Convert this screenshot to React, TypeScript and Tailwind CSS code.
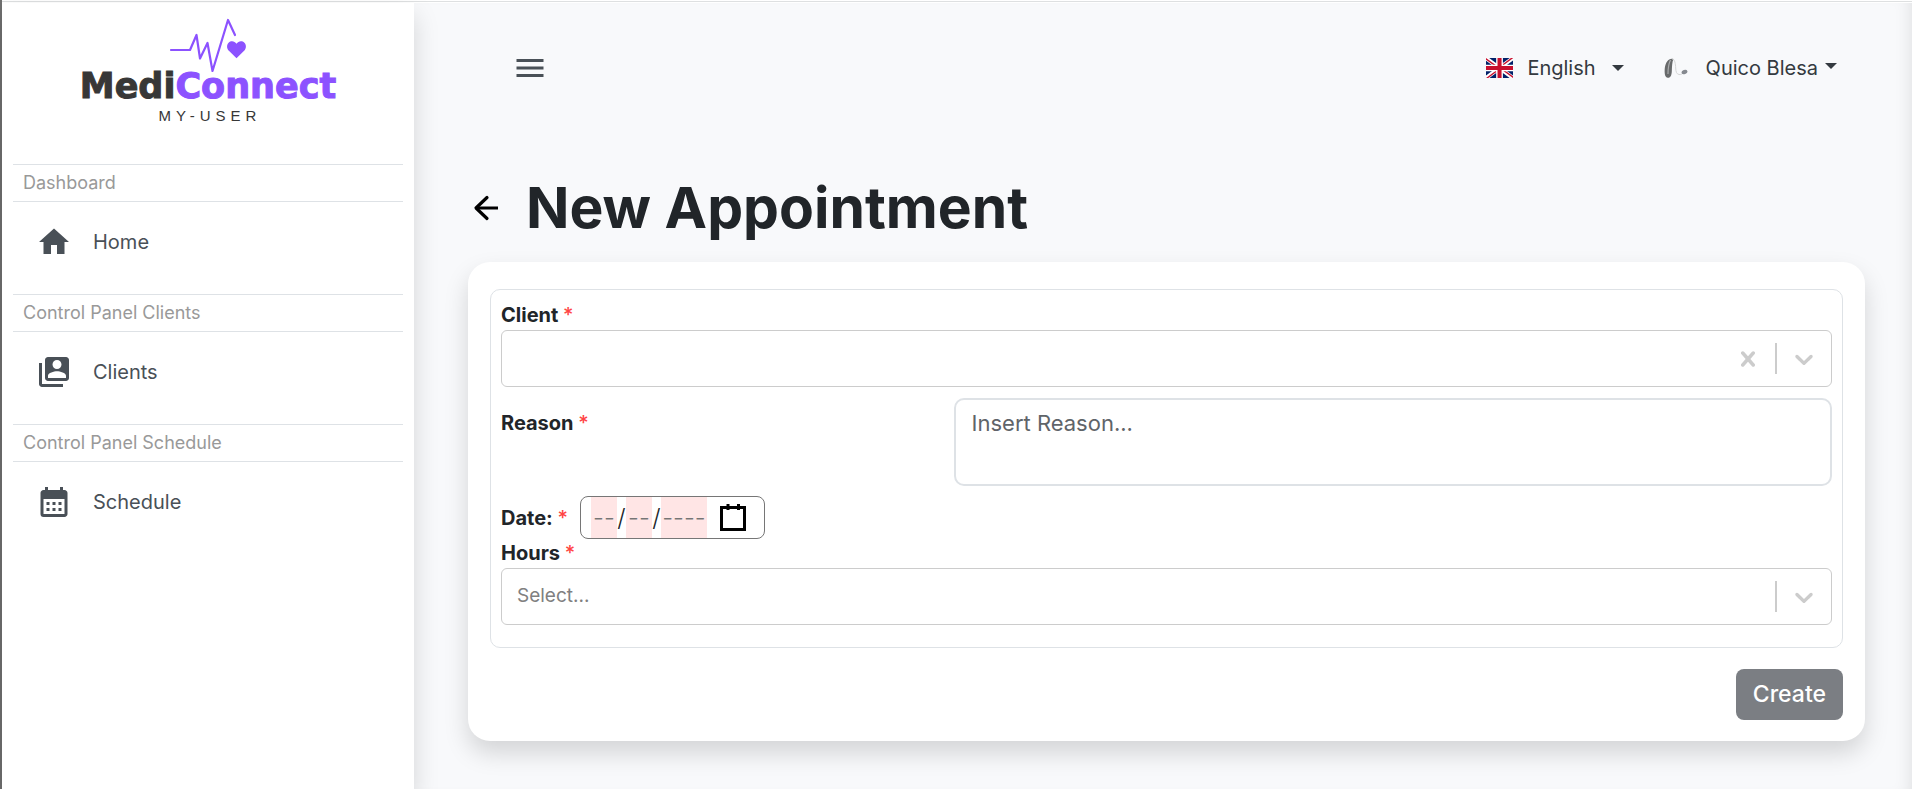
import { useState } from 'react';
import type { ReactNode } from 'react';
import { MdMenu, MdHome, MdSwitchAccount, MdCalendarMonth } from 'react-icons/md';

function Logo() {
  return (
    <a href="#" className="flex h-[161px] flex-col items-center pt-3">
      <svg className="shrink-0" width="80" height="58" viewBox="0 0 80 58" fill="none" aria-hidden="true">
        <path
          d="M3 35h19l6.5-15L32 43.5 39.5 28l5 28L60 5l7 15"
          stroke="#8c52ff"
          strokeWidth="2.2"
          strokeLinecap="round"
          strokeLinejoin="round"
        />
        <path
          d="M68.500 43.200l-7.600-7.400c-2.400-2.400-2.300-6.100-.3-8.100 2.200-2.200 6-2 7.900 1.100 1.900-3.100 5.700-3.300 7.900-1.100 2 2 2.100 5.700-.3 8.100z"
          fill="#8c52ff"
        />
      </svg>
      <span className="-mt-1 font-['DejaVu_Sans',sans-serif] text-[35px] leading-[34px] font-bold text-[#373737] [-webkit-text-stroke:1px_currentColor]">
        Medi<span className="text-[#8c52ff]">Connect</span>
      </span>
      <span className="pl-1 font-['Liberation_Sans',sans-serif] text-[15px] leading-[26px] tracking-[5px] text-[#373737]">
        MY-USER
      </span>
    </a>
  );
}

function NavSection({ title, label, icon }: { title: string; label: string; icon: ReactNode }) {
  return (
    <section className="mb-3">
      <h2 className="border-y border-[#dee2e6] px-[10px] text-lg leading-9 text-[#999999]">{title}</h2>
      <a href="#" className="flex h-20 items-center gap-[21px] px-[23px] text-xl text-[#495057]">
        {icon}
        {label}
      </a>
    </section>
  );
}

function Flag() {
  return (
    <svg width="27" height="20" viewBox="0 0 640 480" preserveAspectRatio="none" aria-hidden="true">
      <path fill="#012169" d="M0 0h640v480H0z" />
      <path fill="#fff" d="m75 0 244 181L562 0h78v62L400 241l240 178v61h-80L320 301 81 480H0v-60l239-178L0 64V0z" />
      <path fill="#c8102e" d="m424 281 216 159v40L369 281zm-184 20 6 35L54 480H0zM640 0v3L391 191l2-44L590 0zM0 0l239 176h-60L0 42z" />
      <path fill="#fff" d="M241 0v480h160V0zM0 160v160h640V160z" />
      <path fill="#c8102e" d="M0 193v96h640v-96zM273 0v480h96V0z" />
    </svg>
  );
}

function Avatar() {
  return (
    <svg width="24" height="24" viewBox="0 0 24 24" fill="none" aria-hidden="true">
      <path d="M9.500 3C5 1.500 1.500 6 .8 12c-.5 5 0 9.500 3 9.800 2.800.2 3.700-2.300 4-6.300C8 11 8 6 9.500 3z" fill="#686a6b" />
      <path d="M6.500 4C5 7 4 11 4 18" stroke="#a9abac" strokeWidth="1.200" />
      <path d="M8 3c3 0 3.500 5 3.700 9 .2 4 .8 6 3.300 6.500 2 .3 3-.5 4-1.500" stroke="#d5d6d6" strokeWidth="1" />
      <ellipse cx="20.500" cy="16" rx="3" ry="2.100" transform="rotate(-20 20.500 16)" fill="#85898f" />
    </svg>
  );
}

function Caret({ className }: { className: string }) {
  return (
    <svg className={className} width="12" height="6" viewBox="0 0 12 6" aria-hidden="true">
      <path d="M0 0h12L6 6z" fill="#343a40" />
    </svg>
  );
}

function Required() {
  return <span className="font-medium text-[#ff4444]">*</span>;
}

function Chevron() {
  return (
    <svg width="30" height="30" viewBox="0 0 20 20" fill="#cccccc" aria-hidden="true">
      <path d="M4.516 7.548c0.436-0.446 1.043-0.481 1.576 0l3.908 3.747 3.908-3.747c0.533-0.481 1.141-0.446 1.574 0 0.436 0.445 0.408 1.197 0 1.615-0.406 0.418-4.695 4.502-4.695 4.502-0.217 0.223-0.502 0.335-0.787 0.335s-0.570-0.112-0.789-0.335c0 0-4.287-4.084-4.695-4.502s-0.436-1.170 0-1.615z" />
    </svg>
  );
}

function Cross() {
  return (
    <svg width="30" height="30" viewBox="0 0 20 20" fill="#cccccc" aria-hidden="true">
      <path d="M14.348 14.849c-0.469 0.469-1.229 0.469-1.697 0l-2.651-3.030-2.651 3.029c-0.469 0.469-1.229 0.469-1.697 0-0.469-0.469-0.469-1.229 0-1.697l2.758-3.150-2.759-3.152c-0.469-0.469-0.469-1.228 0-1.697s1.228-0.469 1.697 0l2.652 3.031 2.651-3.031c0.469-0.469 1.228-0.469 1.697 0s0.469 1.229 0 1.697l-2.758 3.152 2.758 3.150c0.469 0.469 0.469 1.229 0 1.698z" />
    </svg>
  );
}

function SelectField({
  id,
  label,
  placeholder,
  options,
  clearable,
}: {
  id: string;
  label: string;
  placeholder: string;
  options: string[];
  clearable?: boolean;
}) {
  const [value, setValue] = useState('');
  return (
    <div>
      <label htmlFor={id} className="block text-xl leading-[29px] font-bold">
        {label} <Required />
      </label>
      <div className="flex h-[57px] items-center rounded-md border border-[#cccccc] bg-white">
        <select
          id={id}
          value={value}
          onChange={(e) => setValue(e.target.value)}
          className="h-full min-w-0 flex-1 appearance-none bg-transparent px-[15px] text-[19px] text-[#808080] outline-none"
        >
          <option value="">{placeholder}</option>
          {options.map((o) => (
            <option key={o}>{o}</option>
          ))}
        </select>
        {clearable && (
          <button type="button" aria-label="Clear" onClick={() => setValue('')} className="px-3">
            <Cross />
          </button>
        )}
        <span className="h-[31px] w-0.5 bg-[#cccccc]" />
        <span className="px-3">
          <Chevron />
        </span>
      </div>
    </div>
  );
}

const segment =
  'h-full bg-[#ffe5e5] text-center font-light text-[#212529] placeholder:text-[#757575] placeholder:opacity-100 outline-none';

function DateField() {
  return (
    <div role="group" aria-label="Date" className="mt-[10px] flex items-center gap-3">
      <label htmlFor="day" className="text-xl font-bold">
        Date: <Required />
      </label>
      <div className="flex h-[43px] w-[185px] items-center rounded-lg border border-[#767676] bg-white pl-[10px] text-2xl font-light">
        <input id="day" placeholder="--" maxLength={2} className={`${segment} w-[26px]`} />
        <span className="w-[9px] text-center">/</span>
        <input aria-label="Month" placeholder="--" maxLength={2} className={`${segment} w-[26px]`} />
        <span className="w-[9px] text-center">/</span>
        <input aria-label="Year" placeholder="----" maxLength={4} className={`${segment} w-[46px]`} />
        <button type="button" aria-label="Open calendar" className="ml-3">
          <svg width="28" height="28" viewBox="0 0 28 28" fill="none" aria-hidden="true">
            <path d="M2.500 3.500h23v22h-23z" stroke="#000" strokeWidth="3" />
            <path d="M9 0v6M19.500 0v6" stroke="#000" strokeWidth="3" />
          </svg>
        </button>
      </div>
    </div>
  );
}

export default function App() {
  const [reason, setReason] = useState('');
  return (
    <div className="flex min-h-screen flex-col border-l-2 border-[#6f6f6f] bg-[#f8f9fb] font-['Inter',sans-serif] text-[#212529]">
      <div className="h-[3px] border-y border-white bg-[#dee0e1]" />
      <div className="flex flex-1">
        <aside className="z-10 w-[412px] shrink-0 bg-white px-[11px] shadow-[0_12px_24px_rgba(0,0,0,0.15)]">
          <Logo />
          <nav>
            <NavSection title="Dashboard" label="Home" icon={<MdHome size={36} />} />
            <NavSection title="Control Panel Clients" label="Clients" icon={<MdSwitchAccount size={36} />} />
            <NavSection title="Control Panel Schedule" label="Schedule" icon={<MdCalendarMonth size={36} />} />
          </nav>
        </aside>

        <div className="min-w-0 flex-1 pr-[47px] pl-[54px] shadow-[inset_-14px_0_18px_-14px_rgba(0,0,0,0.12)]">
          <header className="flex h-[130px] items-center justify-between pr-7 pl-11">
            <button type="button" aria-label="Toggle menu" className="text-[#495057]">
              <MdMenu size={36} />
            </button>
            <div className="flex items-center gap-10 text-xl text-[#343a40]">
              <button type="button" className="flex items-center">
                <Flag />
                <span className="mr-4 ml-[14px]">English</span>
                <Caret className="" />
              </button>
              <button type="button" className="flex items-center">
                <Avatar />
                <span className="mr-[7px] ml-[18px]">Quico Blesa</span>
                <Caret className="mb-1" />
              </button>
            </div>
          </header>

          <main>
            <div className="flex h-[129px] items-center gap-[27px] pt-5 pl-[5px]">
              <a href="#" aria-label="Back">
                <svg width="26" height="26" viewBox="0 0 26 26" fill="none" stroke="#000" aria-hidden="true">
                  <path d="M14 2.500 3 13l11 10.500" strokeWidth="3.200" strokeLinecap="round" strokeLinejoin="round" />
                  <path d="M3 13h22" strokeWidth="3" />
                </svg>
              </a>
              <h1 className="text-[57px] leading-none font-bold">New Appointment</h1>
            </div>

            <form
              onSubmit={(e) => e.preventDefault()}
              className="rounded-[22px] bg-white px-[22px] pt-[27px] pb-[21px] shadow-[0_12px_24px_rgba(0,0,0,0.15)]"
            >
              <div className="rounded-[10px] border border-[#dee2e6] px-[10px] pt-[11px] pb-[22px]">
                <SelectField id="client" label="Client" placeholder="" options={['Quico Blesa']} clearable />
                <div className="mt-[11px] flex">
                  <label htmlFor="reason" className="w-[34%] pt-[11px] text-xl leading-[29px] font-bold">
                    Reason <Required />
                  </label>
                  <textarea
                    id="reason"
                    value={reason}
                    onChange={(e) => setReason(e.target.value)}
                    placeholder="Insert Reason..."
                    className="h-[88px] min-w-0 flex-1 resize-none rounded-[10px] border-2 border-[#dee2e6] px-4 py-[7px] text-[22px] leading-[33px] outline-none placeholder:text-[#5f6469]"
                  />
                </div>
                <DateField />
                <SelectField id="hours" label="Hours" placeholder="Select..." options={['09:00', '10:00', '11:00']} />
              </div>
              <div className="mt-[21px] flex justify-end">
                <button
                  type="submit"
                  className="h-[51px] rounded-lg bg-[#7b7e83] px-[17px] text-[23px] font-medium text-white"
                >
                  Create
                </button>
              </div>
            </form>
          </main>
        </div>
      </div>
    </div>
  );
}
